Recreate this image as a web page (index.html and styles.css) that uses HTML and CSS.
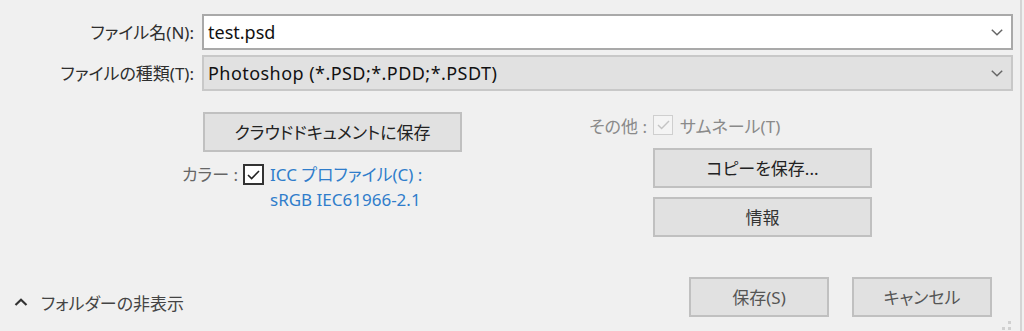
FILE: index.html
```html
<!DOCTYPE html>
<html lang="ja">
<head>
<meta charset="utf-8">
<link rel="stylesheet" href="styles.css">
</head>
<body>
<div class="window">
  <div class="dialog">
    <div class="row first">
      <label class="label">ファイル名(N):</label>
      <div class="input">
        <span class="value">test.psd</span>
        <svg class="chev" width="12" height="7" viewBox="0 0 12 7"><path d="M0.8 0.8 L6 5.8 L11.2 0.8" fill="none" stroke="#666" stroke-width="1.5"/></svg>
      </div>
    </div>
    <div class="row second">
      <label class="label">ファイルの種類(T):</label>
      <div class="input select">
        <span class="value wide">Photoshop (*.PSD;*.PDD;*.PSDT)</span>
        <svg class="chev" width="12" height="7" viewBox="0 0 12 7"><path d="M0.8 0.8 L6 5.8 L11.2 0.8" fill="none" stroke="#666" stroke-width="1.5"/></svg>
      </div>
    </div>

    <div class="middle">
      <div class="col-left">
        <button class="btn cloud">クラウドドキュメントに保存</button>
        <div class="color-row">
          <span class="color-label">カラー :</span>
          <span class="check on">
            <svg width="13" height="10" viewBox="0 0 13 10"><path d="M1 5 L4.6 8.6 L12 1" fill="none" stroke="#222" stroke-width="1.6"/></svg>
          </span>
          <span class="profile">ICC プロファイル(C) :<br>sRGB IEC61966-2.1</span>
        </div>
      </div>
      <div class="col-right">
        <div class="opt-row">
          <span class="opt-label">その他 :</span>
          <span class="check off">
            <svg width="13" height="10" viewBox="0 0 13 10"><path d="M1 5 L4.6 8.6 L12 1" fill="none" stroke="#c4c4c4" stroke-width="1.4"/></svg>
          </span>
          <span class="opt-text">サムネール(T)</span>
        </div>
        <button class="btn side copy">コピーを保存...</button>
        <button class="btn side info">情報</button>
      </div>
    </div>

    <div class="footer">
      <div class="toggle">
        <svg width="14" height="8" viewBox="0 0 14 8"><path d="M1.5 7 L7 1.8 L12.5 7" fill="none" stroke="#333" stroke-width="2.2"/></svg>
        <span>フォルダーの非表示</span>
      </div>
      <div class="actions">
        <button class="btn act">保存(S)</button>
        <button class="btn act">キャンセル</button>
      </div>
    </div>
  </div>
  <svg class="grip" width="14" height="12" viewBox="0 0 14 12">
    <rect x="6" y="2" width="3" height="3" fill="#d0d0d0"/>
    <rect x="0" y="8" width="3" height="3" fill="#d0d0d0"/>
    <rect x="6" y="8" width="3" height="3" fill="#d0d0d0"/>
  </svg>
</div>
</body>
</html>
```

FILE: styles.css
```css
* { box-sizing: border-box; }
html, body {
  margin: 0;
  padding: 0;
  background: #f0f0f0;
}
body {
  font-family: "Noto Sans", "Noto Sans CJK JP", sans-serif;
  font-size: 17px;
  font-feature-settings: "palt";
  color: #333;
}
.window {
  position: relative;
  width: 1024px;
  height: 331px;
  overflow: hidden;
  background: #f0f0f0;
}
.dialog {
  width: 1022px;
  height: 331px;
  border-right: 2px solid #d4d4d4;
  display: flex;
  flex-direction: column;
  padding-top: 14px;
}
.row {
  display: flex;
  align-items: center;
  height: 36px;
}
.row.second { margin-top: 5px; }
.label {
  width: 194px;
  text-align: right;
  color: #2e2e2e;
  white-space: nowrap;
  line-height: 1;
}
.input {
  margin-left: 8px;
  width: 811px;
  height: 36px;
  background: #fff;
  border: 2px solid #a9a9a9;
  display: flex;
  align-items: center;
  padding: 0 8px 0 4px;
}
.input.select {
  background: #e1e1e1;
  border-color: #c8c8c8;
}
.value {
  flex: 1;
  color: #111;
  font-size: 18px;
  white-space: nowrap;
}
.value.wide { letter-spacing: 0.45px; }
.chev { flex: none; margin-top: 1px; }

.middle {
  display: flex;
  margin-top: 21px;
}
.col-left { width: 560px; }
.btn {
  font: inherit;
  font-feature-settings: "palt";
  background: #e1e1e1;
  border: 2px solid #c0c0c0;
  color: #222;
  padding: 0;
  display: flex;
  align-items: center;
  justify-content: center;
  line-height: 1;
}
.cloud {
  margin-left: 203px;
  width: 259px;
  height: 40px;
}
.color-row {
  display: flex;
  align-items: flex-start;
  margin-top: 12px;
}
.color-label {
  width: 238px;
  text-align: right;
  color: #666;
  line-height: 22px;
}
.check {
  width: 21px;
  height: 21px;
  flex: none;
  display: flex;
  align-items: center;
  justify-content: center;
}
.check.on {
  margin-left: 5px;
  background: #fff;
  border: 2px solid #333;
}
.profile {
  margin-left: 6px;
  margin-top: -2px;
  color: #2f7dcb;
  line-height: 25px;
  white-space: nowrap;
}
.col-right { display: flex; flex-direction: column; }
.opt-row {
  display: flex;
  align-items: center;
  margin-top: 3px;
  height: 20px;
}
.opt-label {
  width: 87px;
  text-align: right;
  color: #8a8a8a;
  white-space: nowrap;
}
.check.off {
  margin-left: 6px;
  width: 20px;
  height: 20px;
  background: #f4f4f4;
  border: 1.5px solid #cfcfcf;
}
.opt-text {
  margin-left: 7px;
  color: #8a8a8a;
  white-space: nowrap;
}
.side {
  margin-left: 93px;
  width: 219px;
  height: 40px;
}
.copy { margin-top: 13px; }
.info { margin-top: 9px; color: #333; }

.footer {
  margin-top: auto;
  padding: 0 28px 14px 14px;
  display: flex;
  align-items: center;
  justify-content: space-between;
}
.toggle {
  display: flex;
  align-items: center;
  padding-top: 11px;
  color: #444;
}
.toggle svg { margin-right: 13px; margin-top: -1px; }
.actions { display: flex; gap: 23px; }
.act {
  width: 140px;
  height: 40px;
  color: #555;
}
.grip {
  position: absolute;
  right: 8px;
  bottom: 0;
}
```
